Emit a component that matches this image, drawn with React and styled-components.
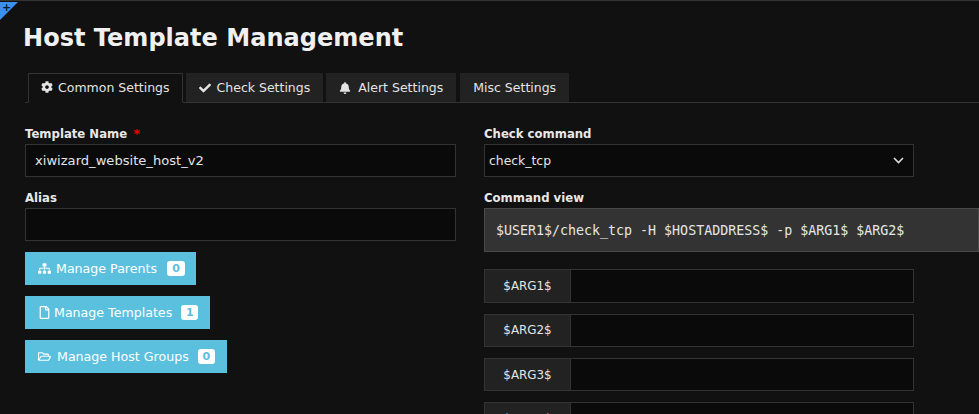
import React from "react";
import styled, { createGlobalStyle } from "styled-components";
import { FaCog, FaCheck, FaBell, FaSitemap, FaRegFile, FaRegFolderOpen } from "react-icons/fa";

const Global = createGlobalStyle`
  html, body { margin: 0; padding: 0; height: 100%; background: #111; overflow: hidden; }
  body { font-family: "DejaVu Sans", Verdana, sans-serif; font-size: 13px; color: #e8e8e8; }
  * { box-sizing: border-box; }
`;

const Page = styled.div`
  position: relative;
  width: 979px;
  height: 414px;
  overflow: hidden;
  background: #111;
  border-top: 1px solid #333;
  padding-top: 21px;
`;

const Corner = styled.div`
  position: absolute;
  left: 0;
  top: 1px;
  width: 0;
  height: 0;
  border-top: 18px solid #3b8ff0;
  border-right: 18px solid transparent;
`;

const CornerPlus = styled.span`
  position: absolute;
  left: 2px;
  top: 1px;
  font-size: 11px;
  line-height: 11px;
  font-weight: bold;
  color: #0c1c30;
`;

const Title = styled.h1`
  margin: 0 0 19px 23px;
  font-size: 24.05px;
  line-height: 32px;
  font-weight: bold;
  color: #f0f0f0;
`;

const TabBar = styled.div`
  display: flex;
  gap: 3px;
  margin-left: 25px;
  padding-left: 3px;
  height: 30px;
  border-bottom: 1px solid #333;
`;

const Tab = styled.div`
  display: flex;
  align-items: center;
  gap: ${(p) => p.$gap ?? 6}px;
  height: ${(p) => (p.$active ? "30px" : "29px")};
  margin-left: ${(p) => p.$offset ?? 0}px;
  padding: 0 ${(p) => (p.$active ? 12 : 13)}px ${(p) => (p.$active ? 2 : 0)}px;
  background: ${(p) => (p.$active ? "#111" : "#222")};
  border: ${(p) => (p.$active ? "1px solid #333" : "none")};
  border-bottom: ${(p) => (p.$active ? "1px solid #111" : "none")};
  color: #e4e4e4;
  font-size: 12.5px;
  svg { font-size: 12px; }
`;

const Columns = styled.div`
  display: grid;
  grid-template-columns: 431px 495px;
  column-gap: 28px;
  margin: 23px 0 0 25px;
`;

const Column = styled.div`
  display: flex;
  flex-direction: column;
`;

const Label = styled.label`
  display: block;
  height: 18px;
  line-height: 16px;
  font-size: 11.7px;
  font-weight: bold;
  color: #e8e8e8;
`;

const Star = styled.span`
  color: #e00;
  margin-left: 2px;
  font-size: 13px;
`;

const Input = styled.div`
  height: 33px;
  width: ${(p) => p.$width || "100%"};
  margin-bottom: ${(p) => p.$mb ?? 13}px;
  padding: 0 9px;
  display: flex;
  align-items: center;
  justify-content: space-between;
  background: #0a0a0a;
  border: 1px solid #333;
  color: #e4e4e4;
  font-size: 13.1px;
`;

const SelectBox = styled(Input)`
  padding: 0 9px 0 4px;
  font-size: 12.4px;
  svg { display: block; }
`;

const Button = styled.div`
  display: flex;
  align-items: center;
  align-self: flex-start;
  height: 33px;
  margin-bottom: 11px;
  padding: 0 ${(p) => p.$right ?? 12}px 0 13px;
  background: #5bc0de;
  color: #fff;
  font-size: 12.62px;
  svg {
    font-size: 13px;
    flex-shrink: 0;
    margin-right: ${(p) => p.$iconGap ?? 5}px;
  }
`;

const ButtonLabel = styled.span`
  white-space: nowrap;
`;

const Badge = styled.span`
  margin-left: ${(p) => p.$gap ?? 9}px;
  min-width: ${(p) => p.$width ?? 17}px;
  padding: 0 4px;
  height: 15px;
  line-height: 15px;
  border-radius: 3px;
  background: #fff;
  color: #5bc0de;
  font-size: 11px;
  font-weight: bold;
  text-align: center;
`;

const CommandView = styled.div`
  height: 44px;
  margin-bottom: 17.2px;
  padding: 0 11px;
  display: flex;
  align-items: center;
  background: #333;
  border: 1px solid #4a4a4a;
  color: #e6e6e6;
  font-family: "DejaVu Sans Mono", monospace;
  font-size: 13.3px;
  white-space: nowrap;
`;

const ArgRow = styled.div`
  display: flex;
  flex-shrink: 0;
  width: 430px;
  height: 33.4px;
  margin-bottom: 11px;
  border: 1px solid #333;
`;

const ArgName = styled.div`
  width: 86px;
  display: flex;
  align-items: center;
  justify-content: center;
  background: #222;
  border-right: 1px solid #333;
  color: #e4e4e4;
  font-size: 11.9px;
`;

const ArgInput = styled.div`
  flex: 1;
  background: #0a0a0a;
`;

export default function App() {
  return (
    <>
      <Global />
      <Page>
        <Corner />
        <CornerPlus>+</CornerPlus>
        <Title>Host Template Management</Title>
        <TabBar>
          <Tab $active $gap={5}><FaCog />Common Settings</Tab>
          <Tab><FaCheck />Check Settings</Tab>
          <Tab $gap={7}><FaBell />Alert Settings</Tab>
          <Tab $offset={1}>Misc Settings</Tab>
        </TabBar>
        <Columns>
          <Column>
            <Label>Template Name <Star>*</Star></Label>
            <Input>xiwizard_website_host_v2</Input>
            <Label>Alias</Label>
            <Input $mb={11} />
            <Button $right={11}><FaSitemap /><ButtonLabel>Manage Parents</ButtonLabel><Badge $gap={10} $width={18}>0</Badge></Button>
            <Button $iconGap={3}><FaRegFile /><ButtonLabel>Manage Templates</ButtonLabel><Badge>1</Badge></Button>
            <Button $iconGap={6}><FaRegFolderOpen /><ButtonLabel>Manage Host Groups</ButtonLabel><Badge>0</Badge></Button>
          </Column>
          <Column>
            <Label>Check command</Label>
            <SelectBox $width="430px">
              check_tcp
              <svg width="11" height="7" viewBox="0 0 11 7" fill="none" stroke="#ddd" strokeWidth="1.6">
                <path d="M1 1l4.5 4.5L10 1" />
              </svg>
            </SelectBox>
            <Label>Command view</Label>
            <CommandView>$USER1$/check_tcp -H $HOSTADDRESS$ -p $ARG1$ $ARG2$</CommandView>
            {["$ARG1$", "$ARG2$", "$ARG3$", "$ARG4$"].map((a) => (
              <ArgRow key={a}>
                <ArgName>{a}</ArgName>
                <ArgInput />
              </ArgRow>
            ))}
          </Column>
        </Columns>
      </Page>
    </>
  );
}
